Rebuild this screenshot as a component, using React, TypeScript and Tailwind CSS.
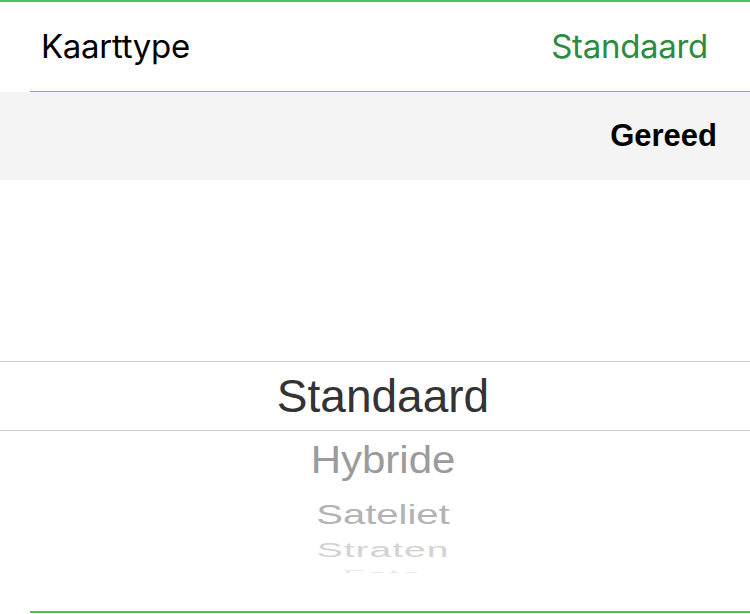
export default function App() {
  return (
    <div className="w-[750px] h-[614px] bg-white overflow-hidden font-['Liberation_Sans',sans-serif]">
      <div className="h-[2px] bg-[#4cc45a]" />

      {/* Setting row */}
      <div className="h-[89px] flex items-center justify-between pl-[41px] pr-[42px] font-['Inter',sans-serif] text-[33px] tracking-[-0.3px]">
        <span className="text-black">Kaarttype</span>
        <span className="text-[#2e8a3e]">Standaard</span>
      </div>
      <div className="ml-[30px] h-px bg-[#7dbb80]" />

      {/* Toolbar */}
      <div className="h-[88px] bg-[#f4f4f4] flex items-center justify-end pr-[33px]">
        <span className="text-[31px] font-bold text-black">Gereed</span>
      </div>

      <div className="h-[181px]" />

      {/* Picker */}
      <div className="h-[70px] border-y border-[#cdcdcd] flex items-center justify-center pl-[16px]">
        <span className="text-[46px] leading-none text-[#333333]">Standaard</span>
      </div>
      <div className="h-[142px] overflow-hidden flex flex-col items-center pl-[16px]">
        <div className="h-[57px] shrink-0 flex items-center justify-center">
          <span className="block text-[42px] leading-none text-[#9b9b9b] scale-y-[0.93]">Hybride</span>
        </div>
        <div className="h-[52px] shrink-0 flex items-center justify-center">
          <span className="block text-[40px] leading-none text-[#b3b3b3] scale-y-[0.7]">Sateliet</span>
        </div>
        <div className="h-[20px] shrink-0 flex items-center justify-center">
          <span className="block text-[39px] leading-none text-[#d2d2d2] scale-y-[0.5] tracking-[1px]">Straten</span>
        </div>
        <div className="h-[28px] shrink-0 flex items-center justify-center">
          <span className="block text-[36px] leading-none text-[#e6e6e6] scale-y-[0.3] tracking-[2px]">Foto</span>
        </div>
      </div>

      <div className="h-[38px]" />
      <div className="ml-[30px] h-[2px] bg-[#4cc45a]" />
    </div>
  );
}
